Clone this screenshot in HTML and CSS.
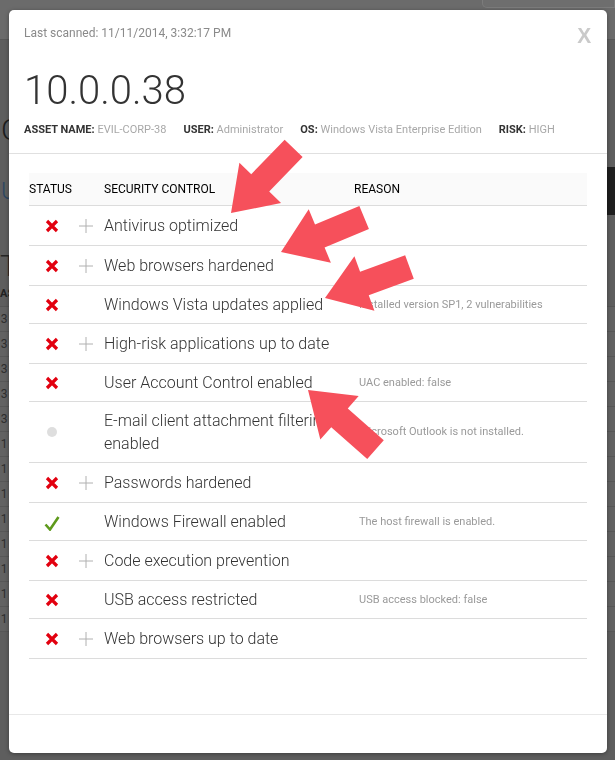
FILE: index.html
```html
<!DOCTYPE html>
<html lang="en">
<head>
<meta charset="utf-8">
<title>Asset details</title>
<link rel="stylesheet" href="styles.css">
</head>
<body>
<div class="page">
  <header class="page-header"><div class="page-search"></div></header>
  <div class="page-title">Computers</div>
  <div class="page-toolbar"><span class="page-tab">Unresolved</span><span class="page-btn"></span></div>
  <div class="page-sub">Top</div>
  <div class="page-thead">ASSET</div>
  <div class="page-rows">
    <div class="page-row">13</div><div class="page-row">13</div><div class="page-row">13</div><div class="page-row">13</div><div class="page-row">13</div>
    <div class="page-row">11</div><div class="page-row">11</div><div class="page-row">11</div><div class="page-row">11</div><div class="page-row">11</div><div class="page-row">11</div><div class="page-row">11</div><div class="page-row">11</div>
  </div>
</div>

<div class="overlay">
  <div class="modal">
    <div class="m-head">
      <div class="m-top">
        <span class="scanned">Last scanned: 11/11/2014, 3:32:17 PM</span>
        <span class="close">X</span>
      </div>
      <h1 class="ip">10.0.0.38</h1>
      <div class="meta">
        <span><b>ASSET NAME:</b> EVIL-CORP-38</span>
        <span><b>USER:</b> Administrator</span>
        <span><b>OS:</b> Windows Vista Enterprise Edition</span>
        <span><b>RISK:</b> HIGH</span>
      </div>
    </div>

    <div class="m-body">
      <div class="row head">
        <div class="h-status">STATUS</div>
        <div>SECURITY CONTROL</div>
        <div>REASON</div>
      </div>

      <div class="row">
        <div class="st"><svg class="ico-x" viewBox="0 0 14 14"><path d="M2 2L12 12M12 2L2 12"/></svg></div>
        <div class="pl"><svg class="ico-plus" viewBox="0 0 16 16"><path d="M8 1V15M1 8H15"/></svg></div>
        <div class="ctl">Antivirus optimized</div>
        <div class="rsn"></div>
      </div>
      <div class="row">
        <div class="st"><svg class="ico-x" viewBox="0 0 14 14"><path d="M2 2L12 12M12 2L2 12"/></svg></div>
        <div class="pl"><svg class="ico-plus" viewBox="0 0 16 16"><path d="M8 1V15M1 8H15"/></svg></div>
        <div class="ctl">Web browsers hardened</div>
        <div class="rsn"></div>
      </div>
      <div class="row">
        <div class="st"><svg class="ico-x" viewBox="0 0 14 14"><path d="M2 2L12 12M12 2L2 12"/></svg></div>
        <div class="pl"></div>
        <div class="ctl">Windows Vista updates applied</div>
        <div class="rsn">Installed version SP1, 2 vulnerabilities</div>
      </div>
      <div class="row">
        <div class="st"><svg class="ico-x" viewBox="0 0 14 14"><path d="M2 2L12 12M12 2L2 12"/></svg></div>
        <div class="pl"><svg class="ico-plus" viewBox="0 0 16 16"><path d="M8 1V15M1 8H15"/></svg></div>
        <div class="ctl">High-risk applications up to date</div>
        <div class="rsn"></div>
      </div>
      <div class="row">
        <div class="st"><svg class="ico-x" viewBox="0 0 14 14"><path d="M2 2L12 12M12 2L2 12"/></svg></div>
        <div class="pl"></div>
        <div class="ctl">User Account Control enabled</div>
        <div class="rsn">UAC enabled: false</div>
      </div>
      <div class="row">
        <div class="st"><span class="dot"></span></div>
        <div class="pl"></div>
        <div class="ctl">E-mail client attachment filtering enabled</div>
        <div class="rsn">Microsoft Outlook is not installed.</div>
      </div>
      <div class="row">
        <div class="st"><svg class="ico-x" viewBox="0 0 14 14"><path d="M2 2L12 12M12 2L2 12"/></svg></div>
        <div class="pl"><svg class="ico-plus" viewBox="0 0 16 16"><path d="M8 1V15M1 8H15"/></svg></div>
        <div class="ctl">Passwords hardened</div>
        <div class="rsn"></div>
      </div>
      <div class="row">
        <div class="st"><svg class="ico-check" viewBox="0 0 16 16"><path d="M1.5 9.5L6 14.5L14.5 2"/></svg></div>
        <div class="pl"></div>
        <div class="ctl">Windows Firewall enabled</div>
        <div class="rsn">The host firewall is enabled.</div>
      </div>
      <div class="row">
        <div class="st"><svg class="ico-x" viewBox="0 0 14 14"><path d="M2 2L12 12M12 2L2 12"/></svg></div>
        <div class="pl"><svg class="ico-plus" viewBox="0 0 16 16"><path d="M8 1V15M1 8H15"/></svg></div>
        <div class="ctl">Code execution prevention</div>
        <div class="rsn"></div>
      </div>
      <div class="row">
        <div class="st"><svg class="ico-x" viewBox="0 0 14 14"><path d="M2 2L12 12M12 2L2 12"/></svg></div>
        <div class="pl"></div>
        <div class="ctl">USB access restricted</div>
        <div class="rsn">USB access blocked: false</div>
      </div>
      <div class="row">
        <div class="st"><svg class="ico-x" viewBox="0 0 14 14"><path d="M2 2L12 12M12 2L2 12"/></svg></div>
        <div class="pl"><svg class="ico-plus" viewBox="0 0 16 16"><path d="M8 1V15M1 8H15"/></svg></div>
        <div class="ctl">Web browsers up to date</div>
        <div class="rsn"></div>
      </div>
    </div>

    <div class="m-foot"></div>
  </div>
</div>

<svg class="arrows" viewBox="0 0 615 760" aria-hidden="true">
  <g class="arrow">
    <polygon transform="translate(231 213) rotate(-45.9)" points="0,0 42,-29 42,-12.5 90,-12.5 90,12.5 42,12.5 42,29"/>
    <polygon transform="translate(281 252) rotate(-22.5)" points="0,0 42,-29 42,-12.5 90,-12.5 90,12.5 42,12.5 42,29"/>
    <polygon transform="translate(325 298) rotate(-20.2)" points="0,0 42,-29 42,-12.5 90,-12.5 90,12.5 42,12.5 42,29"/>
    <polygon transform="translate(308 390) rotate(41.4)" points="0,0 42,-29 42,-12.5 90,-12.5 90,12.5 42,12.5 42,29"/>
  </g>
</svg>
</body>
</html>
```

FILE: styles.css
```css
* { box-sizing: border-box; }

html, body {
  margin: 0;
  padding: 0;
  width: 615px;
  height: 760px;
  overflow: hidden;
}

body {
  background: #5e5e5e;
  font-family: Roboto, "Liberation Sans", sans-serif;
}

/* ---------- dimmed page behind the modal ---------- */
.page {
  width: 615px;
  height: 760px;
}

.page-header {
  height: 40px;
  background: #6b6b6b;
  border-bottom: 1px solid #585858;
  display: flex;
  justify-content: flex-end;
}

.page-search {
  width: 133px;
  height: 9px;
  margin-top: -1px;
  border: 1px solid #7c7c7c;
  border-top: none;
  border-radius: 0 0 0 5px;
  background: #6e6e6e;
}

.page-title {
  margin-top: 72px;
  padding-left: 1px;
  font-size: 30px;
  line-height: 36px;
  font-weight: 300;
  color: #1d1d1d;
}

.page-toolbar {
  margin-top: 19px;
  height: 48px;
  display: flex;
  justify-content: space-between;
  align-items: center;
}

.page-tab {
  padding-left: 1px;
  font-size: 24px;
  font-weight: 300;
  color: #2d4661;
}

.page-btn {
  width: 120px;
  height: 48px;
  background: #1e1e1e;
}

.page-sub {
  margin-top: 34px;
  font-size: 30px;
  font-weight: 300;
  line-height: 34px;
  color: #262626;
}

.page-thead {
  height: 24px;
  font-size: 11px;
  font-weight: 700;
  line-height: 22px;
  color: #222;
  border-bottom: 1px solid #555;
}

.page-row {
  height: 25px;
  font-size: 12px;
  line-height: 24px;
  color: #2e2e2e;
  text-indent: -6px;
  border-bottom: 1px solid #575757;
  background: #626262;
}

/* ---------- modal ---------- */
.overlay {
  position: fixed;
  inset: 0;
  padding: 10px 0 0 9px;
}

.modal {
  width: 598px;
  background: #fff;
  border-radius: 5px;
  box-shadow: 0 1px 4px rgba(0, 0, 0, 0.35);
}

.m-head {
  padding: 15px 15px 16px;
  border-bottom: 1px solid #e0e0e0;
}

.m-top {
  display: flex;
  justify-content: space-between;
  align-items: flex-start;
}

.scanned {
  font-size: 12px;
  line-height: 16px;
  color: #8a8a8a;
}

.close {
  font-family: "Liberation Sans", Arial, sans-serif;
  font-weight: 700;
  font-size: 22px;
  line-height: 1;
  color: #cacaca;
  transform: scaleX(0.95);
}

.ip {
  margin: 20px 0 0;
  font-size: 40px;
  line-height: 48px;
  font-weight: 300;
  color: #333;
}

.meta {
  margin-top: 8px;
  display: flex;
  gap: 17px;
  font-size: 11px;
  line-height: 14px;
  color: #a8a8a8;
}

.meta b {
  font-weight: 700;
  color: #333;
}

.m-body {
  padding: 19px 20px 55px;
}

.row {
  display: grid;
  grid-template-columns: 46px 29px 250px 1fr;
  align-items: center;
  padding: 7px 0;
  border-bottom: 1px solid #dcdcdc;
}

.row.head {
  grid-template-columns: 75px 250px 1fr;
  height: 33px;
  padding: 0;
  background: #fafafa;
  font-size: 12px;
  font-weight: 400;
  color: #000;
}

.st {
  display: flex;
  justify-content: center;
  align-items: center;
}

.pl {
  display: flex;
  align-items: center;
  padding-left: 3px;
}

.ctl {
  font-size: 16px;
  line-height: 23px;
  font-weight: 300;
  color: #333;
}

.rsn {
  padding-left: 5px;
  font-size: 11px;
  line-height: 16px;
  color: #9a9a9a;
}

.ico-x {
  width: 14px;
  height: 14px;
  display: block;
}

.ico-x path {
  stroke: #e2000f;
  stroke-width: 3.2;
  fill: none;
}

.ico-plus {
  width: 16px;
  height: 25px;
  display: block;
  padding: 5px 0 4px;
}

.ico-plus path {
  stroke: #b0b0b0;
  stroke-width: 1;
  fill: none;
}

.ico-check {
  width: 16px;
  height: 16px;
  display: block;
  margin-top: 2px;
}

.ico-check path {
  stroke: #5e9a1c;
  stroke-width: 2.6;
  fill: none;
  stroke-linejoin: miter;
}

.dot {
  width: 10px;
  height: 10px;
  border-radius: 50%;
  background: #dedede;
}

.m-foot {
  height: 39px;
  border-top: 1px solid #e8e8e8;
  border-radius: 0 0 5px 5px;
}

/* ---------- annotation arrows ---------- */
.arrows {
  position: fixed;
  left: 0;
  top: 0;
  width: 615px;
  height: 760px;
  pointer-events: none;
}

.arrow polygon {
  fill: #f6505b;
}
```
